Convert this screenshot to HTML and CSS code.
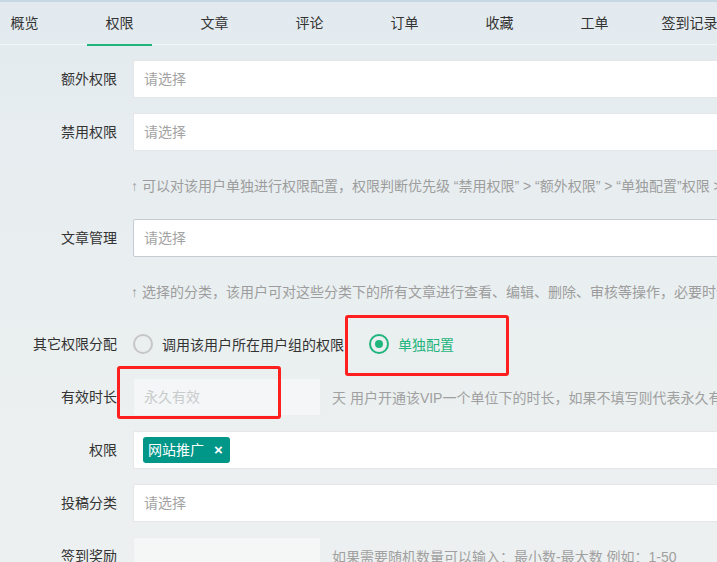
FILE: index.html
```html
<!DOCTYPE html>
<html lang="zh-CN">
<head>
<meta charset="utf-8">
<title>用户权限</title>
<link rel="stylesheet" href="styles.css">
</head>
<body>
<div class="page">
  <ul class="tabs">
    <li class="tab">概览</li>
    <li class="tab active">权限</li>
    <li class="tab">文章</li>
    <li class="tab">评论</li>
    <li class="tab">订单</li>
    <li class="tab">收藏</li>
    <li class="tab">工单</li>
    <li class="tab">签到记录</li>
  </ul>

  <form class="form">
    <div class="row">
      <label class="label">额外权限</label>
      <div class="input">请选择</div>
    </div>
    <div class="row">
      <label class="label">禁用权限</label>
      <div class="input">请选择</div>
    </div>
    <div class="row hint">↑ 可以对该用户单独进行权限配置，权限判断优先级 “禁用权限” &gt; “额外权限” &gt; “单独配置”权限 &gt; 用户组权限</div>
    <div class="row">
      <label class="label">文章管理</label>
      <div class="input hover">请选择</div>
    </div>
    <div class="row hint">↑ 选择的分类，该用户可对这些分类下的所有文章进行查看、编辑、删除、审核等操作，必要时请谨慎</div>
    <div class="row">
      <label class="label">其它权限分配</label>
      <div class="radios">
        <span class="radio"><i class="circle"></i>调用该用户所在用户组的权限</span>
        <span class="radio checked"><i class="circle"></i>单独配置</span>
      </div>
    </div>
    <div class="row">
      <label class="label">有效时长</label>
      <div class="input inline faint">永久有效</div>
      <div class="aux">天 用户开通该VIP一个单位下的时长，如果不填写则代表永久有效</div>
    </div>
    <div class="row">
      <label class="label">权限</label>
      <div class="input tags"><span class="tag">网站推广<b class="x">×</b></span></div>
    </div>
    <div class="row">
      <label class="label">投稿分类</label>
      <div class="input">请选择</div>
    </div>
    <div class="row">
      <label class="label">签到奖励</label>
      <div class="input inline faint"></div>
      <div class="aux">如果需要随机数量可以输入：最小数-最大数 例如：1-50</div>
    </div>
  </form>

  <div class="mark mark-radio"></div>
  <div class="mark mark-time"></div>
</div>
</body>
</html>
```
FILE: styles.css
```css
html, body {
  margin: 0;
  padding: 0;
  overflow: hidden;
}
body {
  width: 717px;
  height: 562px;
  font-family: "Liberation Sans", "Noto Sans CJK SC", sans-serif;
  font-size: 14px;
  color: #333;
  background: linear-gradient(180deg, #e2eaef 0%, #e7edf0 25%, #eaeff0 60%, #edf0f0 100%);
}
.page {
  position: relative;
  width: 900px;
  height: 562px;
  border-top: 2px solid #c6d8e2;
  box-sizing: border-box;
}
.tabs {
  list-style: none;
  margin: 0 0 15px -8px;
  padding: 0;
  display: flex;
  gap: 30px;
  height: 42px;
  border-bottom: 1px solid #f4f7f8;
}
.tab {
  position: relative;
  width: 65px;
  flex: none;
  text-align: center;
  line-height: 42px;
  white-space: nowrap;
}
.tab.active::after {
  content: "";
  position: absolute;
  left: 0;
  right: 0;
  bottom: -2px;
  height: 2px;
  background: #1fb57d;
}
.form {
  margin: 0;
}
.row {
  display: flex;
  align-items: center;
  height: 38px;
  margin-bottom: 15px;
}
.label {
  width: 117px;
  margin-right: 16px;
  text-align: right;
  line-height: 38px;
  white-space: nowrap;
  flex: none;
}
.input {
  box-sizing: border-box;
  width: 700px;
  height: 38px;
  line-height: 36px;
  padding-left: 10px;
  background: #fff;
  border: 1px solid #e6e6e6;
  border-radius: 2px;
  color: #a3a3a3;
  flex: none;
}
.input.hover {
  border-color: #c4cbd2;
}
.input.inline {
  width: 188px;
}
.input.faint {
  background: rgba(255, 255, 255, 0.45);
  border-color: rgba(230, 233, 235, 0.6);
  color: #c9cbcc;
}
.aux {
  margin-left: 11px;
  color: #a0a0a0;
  white-space: nowrap;
}
.hint {
  padding-left: 131px;
  color: #9d9d9d;
  white-space: nowrap;
}
.radios {
  display: flex;
  align-items: center;
  gap: 25px;
}
.radio {
  display: flex;
  align-items: center;
  white-space: nowrap;
}
.circle {
  box-sizing: border-box;
  width: 20px;
  height: 20px;
  border: 2px solid #c6c6c6;
  border-radius: 50%;
  margin-right: 9px;
  display: flex;
  align-items: center;
  justify-content: center;
}
.radio.checked {
  color: #1fb57d;
}
.radio.checked .circle {
  border-color: #1fb57d;
}
.radio.checked .circle::after {
  content: "";
  width: 8px;
  height: 8px;
  border-radius: 50%;
  background: #1fb57d;
}
.tags {
  display: flex;
  align-items: center;
  padding-left: 9px;
}
.tag {
  display: inline-flex;
  align-items: center;
  height: 26px;
  padding: 0 7px 0 5px;
  background: #009688;
  color: #fff;
  border-radius: 3px;
  line-height: 26px;
}
.x {
  margin-left: 10px;
  font-weight: bold;
  font-size: 15px;
}
.mark {
  position: absolute;
  border: 3px solid #ff1f1f;
  border-radius: 3px;
  box-sizing: border-box;
}
.mark-radio {
  left: 345px;
  top: 313px;
  width: 164px;
  height: 61px;
}
.mark-time {
  left: 117px;
  top: 364px;
  width: 164px;
  height: 53px;
}
```
